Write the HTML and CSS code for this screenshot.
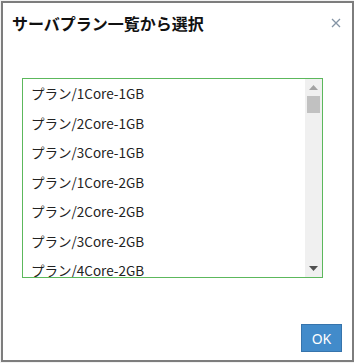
FILE: index.html
```html
<!DOCTYPE html>
<html>
<head>
    <meta charset="utf-8" />
    <title>サーバプラン一覧から選択</title>
    <link rel="stylesheet" href="styles.css">
</head>
<body>
    <div class="dialog">
        <div class="dialog-header">
            <h1 class="dialog-title">サーバプラン一覧から選択</h1>
            <button class="close-btn" aria-label="閉じる">
                <svg width="10" height="10" viewBox="0 0 10 10">
                    <path d="M1 1 L9 9 M9 1 L1 9" stroke="#8494a5" stroke-width="1.3" fill="none" />
                </svg>
            </button>
        </div>

        <div class="dialog-body">
            <div class="listbox">
                <ul class="plan-list">
                    <li>プラン/1Core-1GB</li>
                    <li>プラン/2Core-1GB</li>
                    <li>プラン/3Core-1GB</li>
                    <li>プラン/1Core-2GB</li>
                    <li>プラン/2Core-2GB</li>
                    <li>プラン/3Core-2GB</li>
                    <li>プラン/4Core-2GB</li>
                </ul>
                <div class="scrollbar">
                    <div class="scroll-arrow">
                        <svg width="9" height="5" viewBox="0 0 9 5"><path d="M4.5 0 L9 5 L0 5 Z" fill="#a3a3a3" /></svg>
                    </div>
                    <div class="scroll-thumb"></div>
                    <div class="scroll-track"></div>
                    <div class="scroll-arrow">
                        <svg width="9" height="5" viewBox="0 0 9 5"><path d="M0 0 L9 0 L4.5 5 Z" fill="#505050" /></svg>
                    </div>
                </div>
            </div>
        </div>

        <div class="dialog-footer">
            <button class="btn-ok">OK</button>
        </div>
    </div>
</body>
</html>
```
FILE: styles.css
```css
body {
    margin: 0;
    padding: 1px 0 0 1px;
    background-color: #f2f2f2;
    font-family: "Noto Sans CJK JP", "Noto Sans", sans-serif;
    color: #222;
}

.dialog {
    box-sizing: border-box;
    width: 353px;
    height: 361px;
    border: 2px solid #7d7d7d;
    background-color: #fff;
    display: flex;
    flex-direction: column;
}

.dialog-header {
    height: 39px;
    display: flex;
    align-items: center;
    justify-content: space-between;
    padding: 0 11px 0 9px;
}

.dialog-title {
    margin: 0;
    font-size: 16px;
    font-weight: bold;
    color: #111;
    line-height: 24px;
}

.close-btn {
    border: none;
    background: none;
    padding: 0;
    width: 10px;
    height: 10px;
    display: flex;
}

.dialog-body {
    padding: 36px 0 0 19px;
}

.listbox {
    box-sizing: border-box;
    width: 301px;
    height: 200px;
    border: 1px solid #5cb85c;
    display: flex;
}

.plan-list {
    flex: 1;
    list-style: none;
    margin: 0;
    padding: 0;
    overflow: hidden;
}

    .plan-list li {
        height: 29.5px;
        line-height: 29.5px;
        padding-left: 8px;
        font-size: 13.5px;
        white-space: nowrap;
    }

.scrollbar {
    width: 17px;
    background-color: #f0f0f0;
    display: flex;
    flex-direction: column;
    align-items: center;
}

.scroll-arrow {
    height: 17px;
    width: 17px;
    display: flex;
    align-items: center;
    justify-content: center;
}

.scroll-thumb {
    width: 13px;
    height: 17px;
    background-color: #c1c1c1;
}

.scroll-track {
    flex: 1;
}

.dialog-footer {
    margin-top: auto;
    display: flex;
    justify-content: flex-end;
    padding: 0 10px 8px 0;
}

.btn-ok {
    box-sizing: border-box;
    width: 41px;
    height: 28px;
    background-color: #428bca;
    border: 1px solid #3674ac;
    color: #fff;
    font-family: "Noto Sans", sans-serif;
    font-size: 14px;
    padding: 0;
}
```
